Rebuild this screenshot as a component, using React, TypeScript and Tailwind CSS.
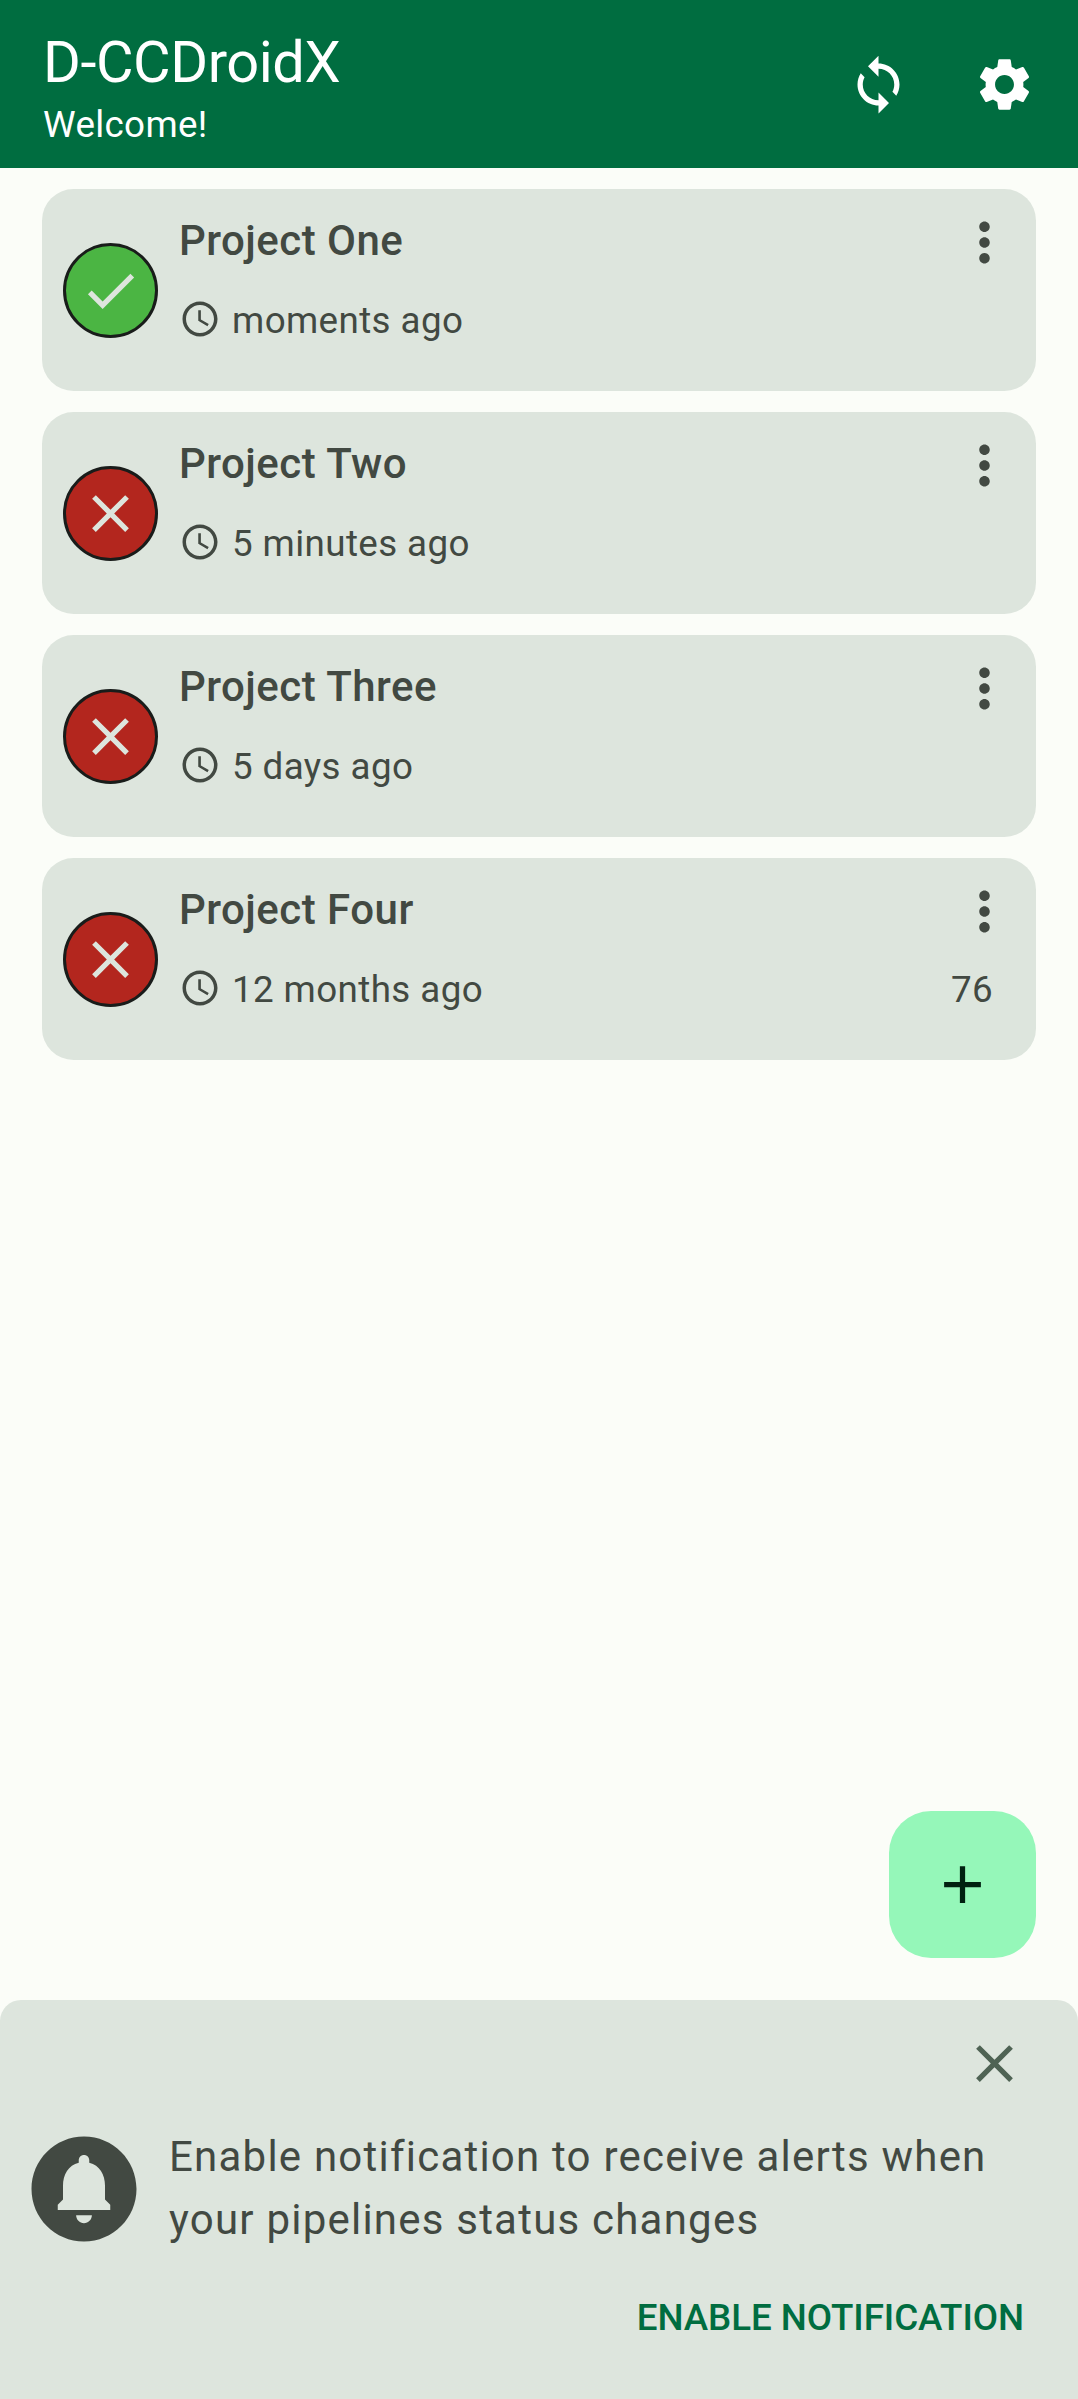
import React from 'react';

const ICONS = {
  sync: 'M12 4V1L8 5l4 4V6c3.31 0 6 2.69 6 6 0 1.01-.25 1.97-.7 2.8l1.46 1.46C19.54 15.03 20 13.57 20 12c0-4.42-3.58-8-8-8zm0 14c-3.31 0-6-2.69-6-6 0-1.01.25-1.97.7-2.8L5.24 7.74C4.46 8.97 4 10.43 4 12c0 4.42 3.58 8 8 8v3l4-4-4-4v3z',
  settings:
    'M19.14 12.94c.04-.3.06-.61.06-.94 0-.32-.02-.64-.07-.94l2.03-1.58c.18-.14.23-.41.12-.61l-1.92-3.32c-.12-.22-.37-.29-.59-.22l-2.39.96c-.5-.38-1.03-.7-1.62-.94l-.36-2.54c-.04-.24-.24-.41-.48-.41h-3.84c-.24 0-.43.17-.47.41l-.36 2.54c-.59.24-1.13.57-1.62.94l-2.39-.96c-.22-.08-.47 0-.59.22L2.74 8.87c-.12.21-.08.47.12.61l2.03 1.58c-.05.3-.09.63-.09.94s.02.64.07.94l-2.03 1.58c-.18.14-.23.41-.12.61l1.92 3.32c.12.22.37.29.59.22l2.39-.96c.5.38 1.03.7 1.62.94l.36 2.54c.05.24.24.41.48.41h3.84c.24 0 .44-.17.47-.41l.36-2.54c.59-.24 1.13-.56 1.62-.94l2.39.96c.22.08.47 0 .59-.22l1.92-3.32c.12-.22.07-.47-.12-.61l-2.01-1.58zM12 15.6c-1.98 0-3.6-1.62-3.6-3.6s1.62-3.6 3.6-3.6 3.6 1.62 3.6 3.6-1.62 3.6-3.6 3.6z',
  check: 'M9 16.17L4.83 12l-1.42 1.41L9 19 21 7l-1.41-1.41z',
  close:
    'M19 6.41L17.59 5 12 10.59 6.41 5 5 6.41 10.59 12 5 17.59 6.41 19 12 13.41 17.59 19 19 17.59 13.41 12z',
  clock:
    'M11.99 2C6.47 2 2 6.48 2 12s4.47 10 9.99 10C17.52 22 22 17.52 22 12S17.52 2 11.99 2zM12 20c-4.42 0-8-3.58-8-8s3.58-8 8-8 8 3.58 8 8-3.58 8-8 8zm.5-13H11v6l5.25 3.15.75-1.23-4.5-2.67z',
  more: 'M12 8c1.1 0 2-.9 2-2s-.9-2-2-2-2 .9-2 2 .9 2 2 2zm0 2c-1.1 0-2 .9-2 2s.9 2 2 2 2-.9 2-2-.9-2-2-2zm0 6c-1.1 0-2 .9-2 2s.9 2 2 2 2-.9 2-2-.9-2-2-2z',
  plus: 'M19 13h-6v6h-2v-6H5v-2h6V5h2v6h6v2z',
  bell: 'M12 2C6.48 2 2 6.48 2 12s4.48 10 10 10 10-4.48 10-10S17.52 2 12 2zm0 16.5c-.83 0-1.5-.67-1.5-1.5h3c0 .83-.67 1.5-1.5 1.5zm5-2.5H7v-1l1-1v-2.61C8 9.27 9.03 7.47 11 7v-.5c0-.57.43-1 1-1s1 .43 1 1V7c1.97.47 3 2.28 3 4.39V14l1 1v1z',
};

function Icon({ name, className = 'size-[63px]' }: { name: keyof typeof ICONS; className?: string }) {
  return (
    <svg viewBox="0 0 24 24" fill="currentColor" className={`shrink-0 ${className}`}>
      <path d={ICONS[name]} />
    </svg>
  );
}

type Project = { name: string; ok: boolean; when: string; build?: string };

const projects: Project[] = [
  { name: 'Project One', ok: true, when: 'moments ago' },
  { name: 'Project Two', ok: false, when: '5 minutes ago' },
  { name: 'Project Three', ok: false, when: '5 days ago' },
  { name: 'Project Four', ok: false, when: '12 months ago', build: '76' },
];

function ProjectCard({ name, ok, when, build }: Project) {
  return (
    <li className="flex h-[202px] items-start rounded-[31.5px] bg-[#dde5dd] pl-[21px] pr-[20px] text-[#424942]">
      <div
        className={`mt-[54px] flex size-[95px] shrink-0 items-center justify-center rounded-full border-3 border-[#191c1a] text-[#dde5dd] ${
          ok ? 'bg-[#4bb543]' : 'bg-[#b3261e]'
        }`}
      >
        <Icon name={ok ? 'check' : 'close'} />
      </div>
      <div className="ml-[21px] flex grow flex-col pt-5">
        <div className="flex items-start justify-between">
          <h2 className="text-[42px] leading-[63px] font-medium tracking-[0.47px]">{name}</h2>
          <button className="mt-[2px]">
            <Icon name="more" />
          </button>
        </div>
        <div className="mt-[21px] flex items-start text-[36.75px] leading-[52px] tracking-[0.4px]">
          <Icon name="clock" className="mt-[3px] size-[42px]" />
          <span className="ml-[11px]">{when}</span>
          {build && <span className="mr-[23px] ml-auto">{build}</span>}
        </div>
      </div>
    </li>
  );
}

export default function App() {
  return (
    <div className="flex h-[2399px] w-[1078px] flex-col bg-[#fbfdf8] font-[Roboto,sans-serif]">
      <header className="flex h-[168px] shrink-0 items-start bg-[#006d40] pr-[42px] pl-[43px] text-white">
        <div className="grow pt-[26px]">
          <h1 className="text-[57.75px] leading-[72px] tracking-[-0.45px]">D-CCDroidX</h1>
          <p className="mt-px text-[36.75px] leading-[52px] tracking-[0.35px]">Welcome!</p>
        </div>
        <div className="flex gap-[63px] pt-[53px]">
          <button>
            <Icon name="sync" />
          </button>
          <button>
            <Icon name="settings" />
          </button>
        </div>
      </header>

      <main className="flex grow flex-col px-[42px] pt-[21px] pb-[42px]">
        <ul className="flex flex-col gap-[21px]">
          {projects.map((p) => (
            <ProjectCard key={p.name} {...p} />
          ))}
        </ul>
        <button className="mt-auto flex size-[147px] items-center justify-center self-end rounded-[42px] bg-[#95f7b9] text-[#002110]">
          <Icon name="plus" />
        </button>
      </main>

      <section className="flex h-[399px] shrink-0 flex-col rounded-t-[21px] bg-[#dde5dd] text-[#424942]">
        <button className="mt-[32px] mr-[52px] self-end text-[#4f6354]">
          <Icon name="close" />
        </button>
        <div className="mt-[30px] flex items-start pl-[21px]">
          <Icon name="bell" className="mt-px size-[126px]" />
          <p className="ml-[22px] text-[42px] leading-[63px] tracking-[1.22px]">
            Enable notification to receive alerts when
            <br />
            your pipelines status changes
          </p>
        </div>
        <button className="mt-[40px] mr-[54px] self-end text-[36.75px] leading-[52px] font-medium tracking-[-0.08px] text-[#006d40]">
          ENABLE NOTIFICATION
        </button>
      </section>
    </div>
  );
}
